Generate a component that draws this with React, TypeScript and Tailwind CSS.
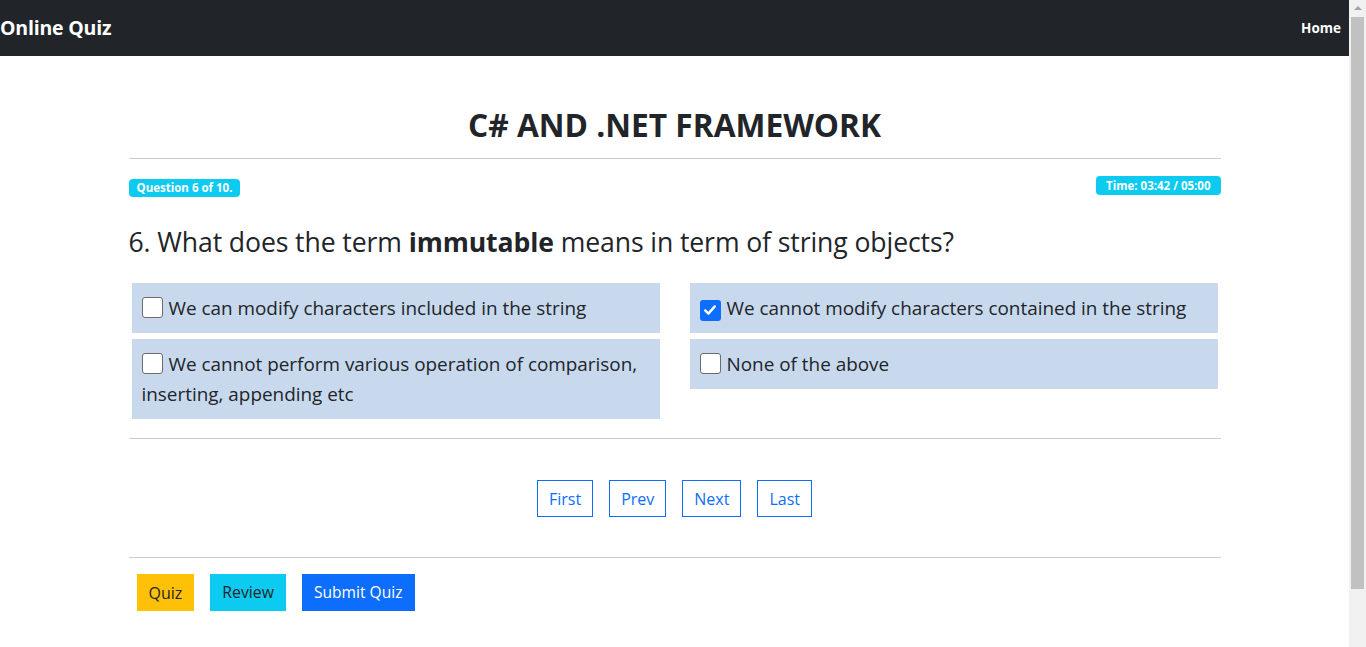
import React from "react";

const font = { fontFamily: '"Open Sans", "Noto Sans", sans-serif' };

function Check({ checked }: { checked?: boolean }) {
  if (checked) {
    return (
      <span className="inline-flex w-[21px] h-[21px] rounded-[3px] bg-[#0d6efd] items-center justify-center mr-[6px] align-[-3px] shrink-0">
        <svg width="16" height="16" viewBox="0 0 20 20">
          <path d="M4 10.5l4 4 8-9" fill="none" stroke="#fff" strokeWidth="3" strokeLinecap="round" strokeLinejoin="round" />
        </svg>
      </span>
    );
  }
  return <span className="inline-block w-[21px] h-[21px] rounded-[3px] border border-[#6c6c6c] bg-white mr-[6px] align-[-3px]" />;
}

function Option({ text, checked }: { text: string; checked?: boolean }) {
  return (
    <div className="bg-[#c8d9ee] px-[10px] py-[10px] text-[18.9px] leading-[30px] text-[#212529]">
      <Check checked={checked} />
      {text}
    </div>
  );
}

function Scrollbar() {
  return (
    <div className="w-[17px] shrink-0 bg-[#f1f1f1] flex flex-col">
      <div className="h-[17px] flex items-center justify-center">
        <span className="w-0 h-0 border-x-[4px] border-x-transparent border-b-[4px] border-b-[#a3a3a3] mt-[-1px]" />
      </div>
      <div className="h-[572px] mx-[2px] bg-[#c1c1c1]" />
      <div className="flex-1" />
    </div>
  );
}

export default function App() {
  return (
    <div className="h-[647px] w-full flex overflow-hidden bg-white text-[#212529]" style={font}>
      <div className="flex-1 min-w-0">
        <nav className="h-[56px] bg-[#212529] flex items-center justify-between pr-[8px]">
          <span className="text-white font-bold text-[19.5px] tracking-[-0.2px]">Online Quiz</span>
          <span className="text-white font-bold text-[13.5px]">Home</span>
        </nav>
        <div className="w-[1092px] mx-auto">
          <h2 className="text-center font-bold text-[31.7px] leading-[38px] mt-[50px] pb-[14px] border-b border-[#cccccc]">
            C# AND .NET FRAMEWORK
          </h2>
          <div className="flex justify-between items-start mt-[17px]">
            <span className="mt-[3px] bg-[#0dcaf0] text-white font-bold text-[11.5px] leading-[18px] px-[8px] rounded-[4px]">
              Question 6 of 10.
            </span>
            <span className="bg-[#0dcaf0] text-white font-bold text-[11.5px] leading-[19px] px-[10px] rounded-[4px]">
              Time: 03:42 / 05:00
            </span>
          </div>
          <h4 className="text-[26.6px] leading-[32px] mt-[29px] tracking-[-0.1px]">
            6. What does the term <b>immutable</b> means in term of string objects?
          </h4>
          <div className="grid grid-cols-2 gap-x-[30px] gap-y-[6px] px-[3px] mt-[25px] items-start">
            <Option text="We can modify characters included in the string" />
            <Option text="We cannot modify characters contained in the string" checked />
            <Option text="We cannot perform various operation of comparison, inserting, appending etc" />
            <Option text="None of the above" />
          </div>
          <div className="border-t border-[#cccccc] mt-[19px]" />
          <div className="flex justify-center gap-[16px] mt-[41px]">
            {["First", "Prev", "Next", "Last"].map((t) => (
              <button key={t} className="h-[37px] px-[11px] border border-[#0d6efd] text-[#0d6efd] text-[16px] bg-white">
                {t}
              </button>
            ))}
          </div>
          <div className="border-t border-[#cccccc] mt-[40px]" />
          <div className="flex gap-[16px] px-[8px] mt-[16px]">
            <button className="h-[37px] px-[12px] bg-[#ffc107] text-[#212529] text-[16px]">Quiz</button>
            <button className="h-[37px] px-[12px] bg-[#0dcaf0] text-[#212529] text-[15.8px]">Review</button>
            <button className="h-[37px] px-[12px] bg-[#0d6efd] text-white text-[15.6px]">Submit Quiz</button>
          </div>
        </div>
      </div>
      <Scrollbar />
    </div>
  );
}
